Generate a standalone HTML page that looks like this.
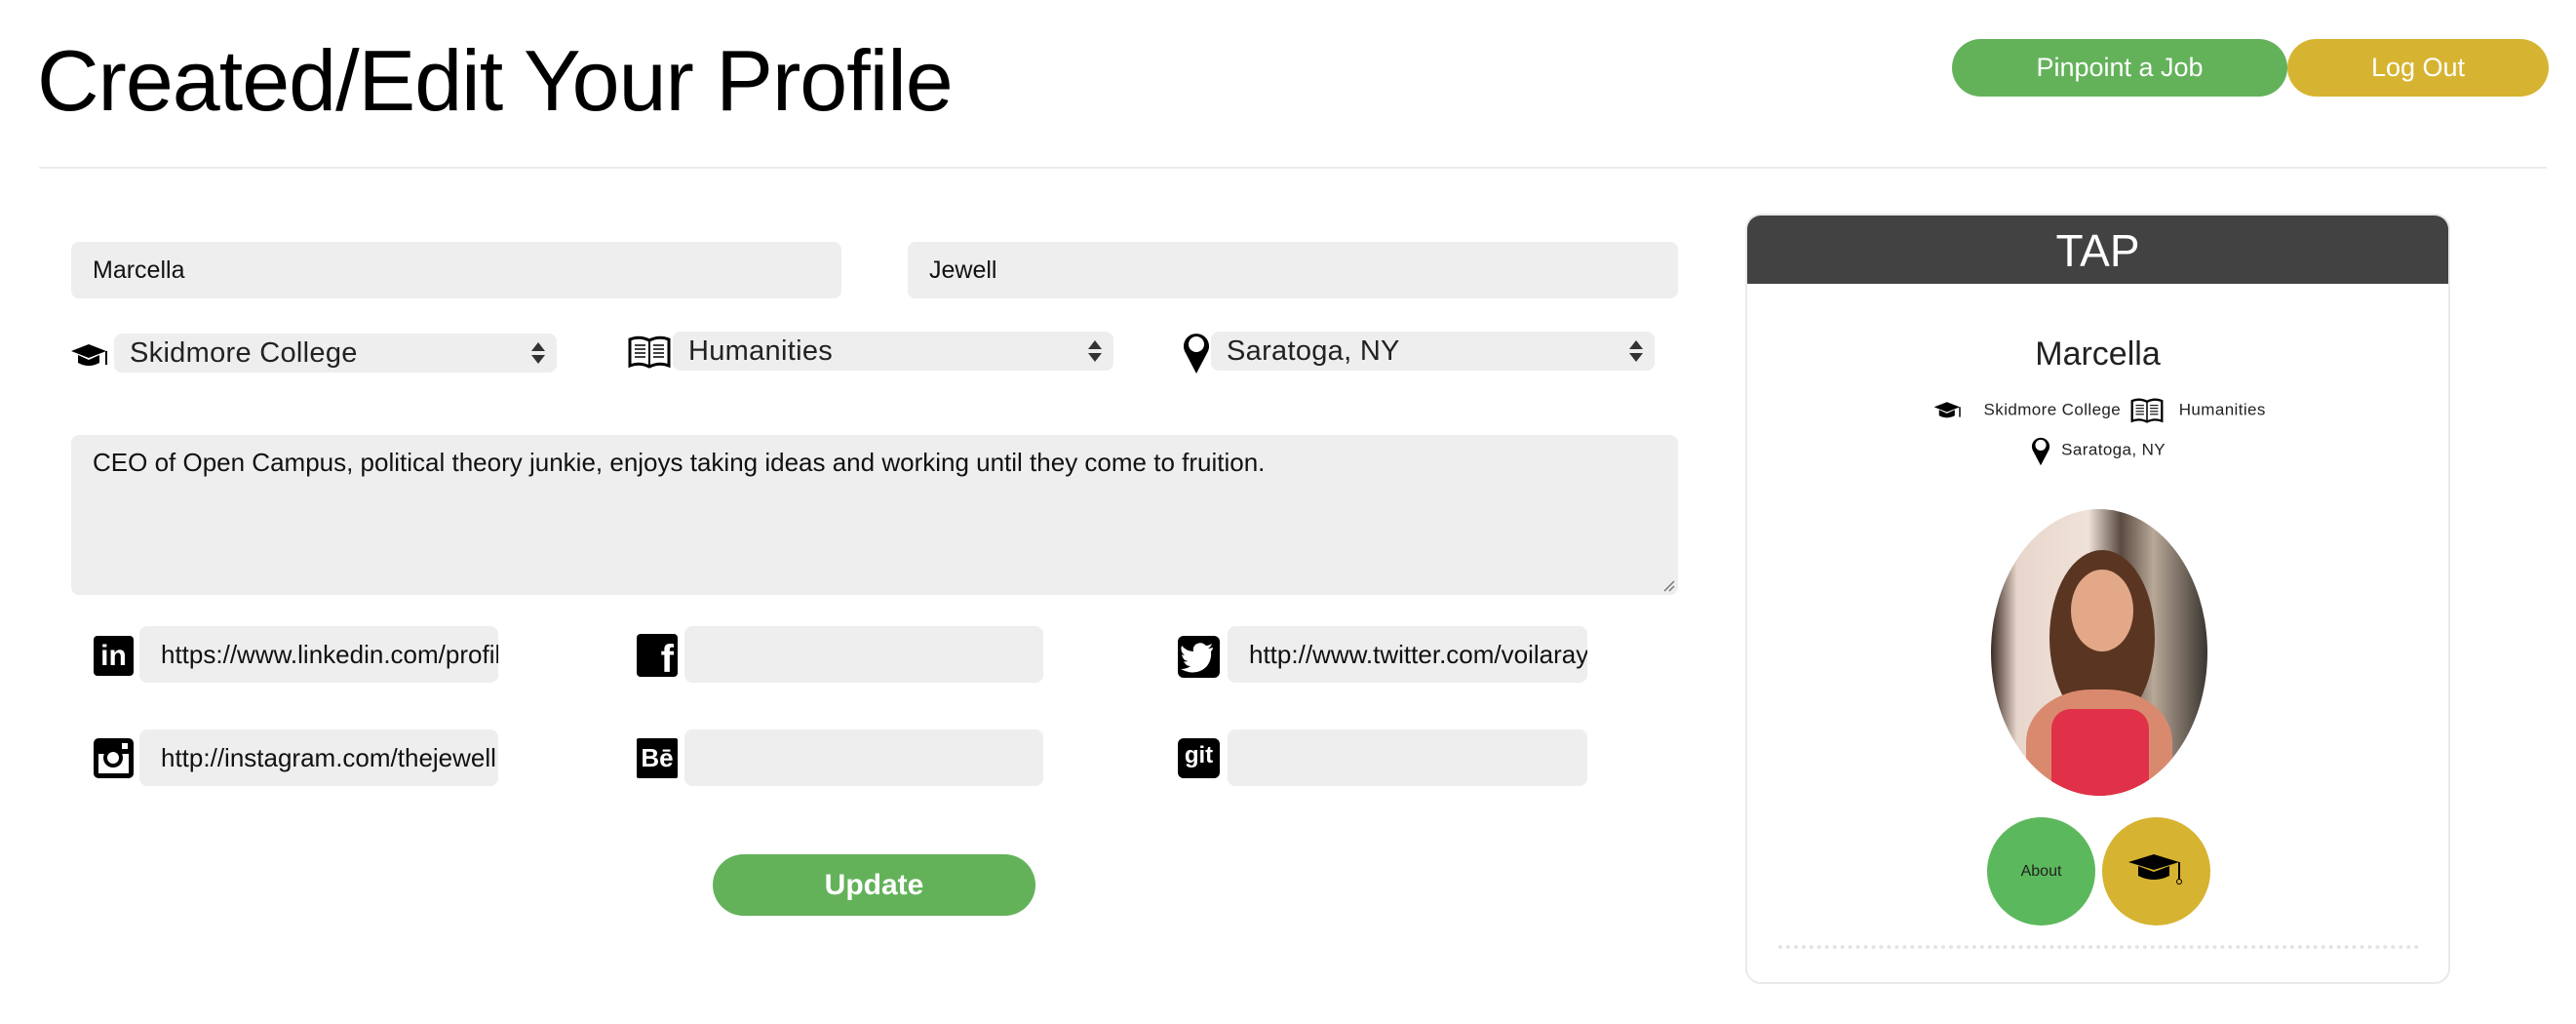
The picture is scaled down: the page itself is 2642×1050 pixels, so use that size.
<!DOCTYPE html>
<html><head><meta charset="utf-8"><style>
*{box-sizing:border-box;margin:0;padding:0}
body{width:2642px;height:1050px;background:#fff;font-family:"Liberation Sans",Arial,sans-serif;position:relative;overflow:hidden;color:#000}
.a{position:absolute}
h1{position:absolute;left:38px;top:32px;font-size:88px;font-weight:normal;letter-spacing:-1px;white-space:nowrap}
.hr{left:40px;top:171px;width:2572px;height:2px;background:#ececec}
.btn{position:absolute;color:#fff;font-size:27px;text-align:center;border-radius:30px}
.in{position:absolute;background:#eeeeee;border-radius:8px;font-size:25px;color:#111;padding-left:22px;white-space:nowrap;overflow:hidden}
.sel{position:absolute;background:#eeeeee;border-radius:8px;font-size:29px;color:#222;padding-left:16px;white-space:nowrap;letter-spacing:0.3px}
.arr{position:absolute;right:12px;top:9px;width:14px;height:22px}
.arr:before{content:"";position:absolute;left:0;top:0;border-left:7px solid transparent;border-right:7px solid transparent;border-bottom:9px solid #333}
.arr:after{content:"";position:absolute;left:0;bottom:0;border-left:7px solid transparent;border-right:7px solid transparent;border-top:9px solid #333}
.ic{position:absolute;background:#000;border-radius:4px;color:#fff;font-weight:bold;text-align:center}
.s{font-size:26px}
</style></head><body>
<h1>Created/Edit Your Profile</h1>
<div class="a hr"></div>
<div class="btn" style="left:2002px;top:40px;width:344px;height:59px;line-height:59px;background:#63b25a">Pinpoint a Job</div>
<div class="btn" style="left:2346px;top:40px;width:268px;height:59px;line-height:59px;background:#d6b431">Log Out</div>

<div class="in" style="left:73px;top:248px;width:790px;height:58px;line-height:58px">Marcella</div>
<div class="in" style="left:931px;top:248px;width:790px;height:58px;line-height:58px">Jewell</div>

<svg class="a" style="left:73px;top:350px" width="42" height="30" viewBox="0 0 42 30"><path d="M0 10 L18 3 L36 10 L18 17Z" fill="#000"/><path d="M7 14 L7 22 Q18 28 29 22 L29 14 L18 19Z" fill="#000"/><path d="M36 10 L36 24" stroke="#000" stroke-width="2"/></svg>
<div class="sel" style="left:117px;top:342px;width:454px;height:40px;line-height:40px">Skidmore College<span class="arr"></span></div>
<svg class="a" style="left:644px;top:344px" width="44" height="34" viewBox="0 0 44 34"><path d="M2 4 Q12 0 22 5 Q32 0 42 4 L42 31 Q32 27 22 32 Q12 27 2 31Z" fill="#fff" stroke="#000" stroke-width="3"/><path d="M22 5 L22 32" stroke="#000" stroke-width="2"/><g stroke="#000" stroke-width="1.5"><path d="M7 10h11M7 14h11M7 18h11M7 22h11M26 10h11M26 14h11M26 18h11M26 22h11"/></g></svg>
<div class="sel" style="left:690px;top:340px;width:452px;height:40px;line-height:40px">Humanities<span class="arr"></span></div>
<svg class="a" style="left:1212px;top:338px" width="30" height="46" viewBox="0 0 30 46"><path d="M15 45 L4 24 A13 13 0 1 1 26 24Z" fill="#000"/><circle cx="15" cy="15" r="8" fill="#fff"/></svg>
<div class="sel" style="left:1242px;top:340px;width:455px;height:40px;line-height:40px">Saratoga, NY<span class="arr"></span></div>

<div class="in" style="left:73px;top:446px;width:1648px;height:164px;padding-top:13px;line-height:30px;font-size:26px">CEO of Open Campus, political theory junkie, enjoys taking ideas and working until they come to fruition.
<svg class="a" style="right:3px;bottom:3px" width="12" height="12"><path d="M1 11L11 1M6 11L11 6" stroke="#777" stroke-width="1.5"/></svg></div>

<div class="ic" style="left:96px;top:652px;width:41px;height:41px;font-size:30px;line-height:42px">in</div>
<div class="in s" style="left:143px;top:642px;width:368px;height:58px;line-height:58px">https://www.linkedin.com/profile</div>
<div class="ic" style="left:653px;top:650px;width:42px;height:44px;font-size:40px;line-height:52px;text-align:right;padding-right:4px">f</div>
<div class="in" style="left:702px;top:642px;width:368px;height:58px"></div>
<svg class="a" style="left:1208px;top:652px" width="43" height="43" viewBox="0 0 43 43"><rect width="43" height="43" rx="6" fill="#000"/><path d="M36 12 Q33 13 31 13 Q34 11 35 8 Q32 10 29 10 Q24 5 18 9 Q15 12 16 16 Q9 16 4 10 Q2 16 7 20 Q5 20 4 19 Q5 25 10 26 Q8 27 6 26 Q8 31 13 31 Q9 34 3 34 Q18 42 29 32 Q35 25 34 16 Q36 14 36 12Z" fill="#fff"/></svg>
<div class="in s" style="left:1259px;top:642px;width:369px;height:58px;line-height:58px">http://www.twitter.com/voilaraynes</div>

<svg class="a" style="left:96px;top:757px" width="41" height="41" viewBox="0 0 41 41"><rect width="41" height="41" rx="5" fill="#000"/><rect x="5" y="16" width="31" height="20" fill="#fff"/><circle cx="20" cy="20" r="10" fill="#000"/><circle cx="20" cy="20" r="6" fill="#fff"/><rect x="29" y="5" width="6" height="6" fill="#fff"/></svg>
<div class="in s" style="left:143px;top:748px;width:368px;height:58px;line-height:58px">http://instagram.com/thejewell</div>
<div class="ic" style="left:653px;top:757px;width:42px;height:41px;font-size:26px;line-height:41px;border-radius:2px">Bē</div>
<div class="in" style="left:702px;top:748px;width:368px;height:58px"></div>
<div class="ic" style="left:1208px;top:757px;width:43px;height:41px;font-size:24px;line-height:36px;border-radius:6px">git</div>
<div class="in" style="left:1259px;top:748px;width:369px;height:58px"></div>

<div class="btn" style="left:731px;top:876px;width:331px;height:63px;line-height:63px;border-radius:32px;background:#63b25a;font-size:30px;font-weight:bold">Update</div>

<div class="a" style="left:1790px;top:219px;width:723px;height:790px;border:2px solid #eaeaea;border-radius:16px;overflow:hidden">
 <div style="height:70px;background:#424242;color:#fff;font-size:46px;text-align:center;line-height:72px">TAP</div>
</div>
<div class="a" style="left:1790px;top:344px;width:723px;text-align:center;font-size:34px;color:#222">Marcella</div>
<div class="a" style="left:1790px;top:408px;width:723px;text-align:center;font-size:17px;letter-spacing:0.4px;color:#222;white-space:nowrap">
<svg width="40" height="22" viewBox="0 0 42 30" style="vertical-align:middle"><path d="M0 10 L18 3 L36 10 L18 17Z" fill="#000"/><path d="M7 14 L7 22 Q18 28 29 22 L29 14 L18 19Z" fill="#000"/><path d="M36 10 L36 24" stroke="#000" stroke-width="2"/></svg>&nbsp;&nbsp; Skidmore College &nbsp;<svg width="34" height="26" viewBox="0 0 44 34" style="vertical-align:middle"><path d="M2 4 Q12 0 22 5 Q32 0 42 4 L42 31 Q32 27 22 32 Q12 27 2 31Z" fill="#fff" stroke="#000" stroke-width="3"/><path d="M22 5 L22 32" stroke="#000" stroke-width="2"/><g stroke="#000" stroke-width="1.5"><path d="M7 10h11M7 14h11M7 18h11M7 22h11M26 10h11M26 14h11M26 18h11M26 22h11"/></g></svg>&nbsp;&nbsp; Humanities</div>
<div class="a" style="left:1790px;top:446px;width:723px;text-align:center;font-size:17px;letter-spacing:0.4px;color:#222;white-space:nowrap"><svg width="22" height="32" viewBox="0 0 30 46" style="vertical-align:middle"><path d="M15 45 L4 24 A13 13 0 1 1 26 24Z" fill="#000"/><circle cx="15" cy="15" r="8" fill="#fff"/></svg>&nbsp; Saratoga, NY</div>

<div class="a" style="left:2042px;top:522px;width:222px;height:294px;border-radius:50%;overflow:hidden;background:linear-gradient(90deg,#3a2a22 0%,#e8d6cc 12%,#efe2d8 45%,#5a4a40 60%,#b8a898 75%,#3b3530 100%)">
 <div class="a" style="left:60px;top:42px;width:108px;height:180px;border-radius:50%;background:#5a3522"></div>
 <div class="a" style="left:82px;top:62px;width:64px;height:84px;border-radius:50%;background:#e2a888"></div>
 <div class="a" style="left:36px;top:185px;width:150px;height:120px;border-radius:45% 45% 0 0;background:#d98a6e"></div>
 <div class="a" style="left:62px;top:205px;width:100px;height:100px;border-radius:20% 20% 0 0;background:#e03148"></div>
</div>

<div class="a" style="left:2038px;top:838px;width:111px;height:111px;border-radius:50%;background:#5cb85c;text-align:center;line-height:111px;font-size:16px;color:#222">About</div>
<div class="a" style="left:2156px;top:838px;width:111px;height:111px;border-radius:50%;background:#d6b330"><svg class="a" style="left:27px;top:36px" width="58" height="36" viewBox="0 0 58 36"><path d="M0 10 L26 2 L52 10 L26 18Z" fill="#000"/><path d="M10 14 L10 24 Q26 32 42 24 L42 14 L26 20Z" fill="#000"/><path d="M52 10 L52 28" stroke="#000" stroke-width="2"/><circle cx="52" cy="30" r="2.5" fill="none" stroke="#000"/></svg></div>

<div class="a" style="left:1824px;top:969px;width:657px;height:0;border-top:4px dotted #e4e4e4"></div>
</body></html>
